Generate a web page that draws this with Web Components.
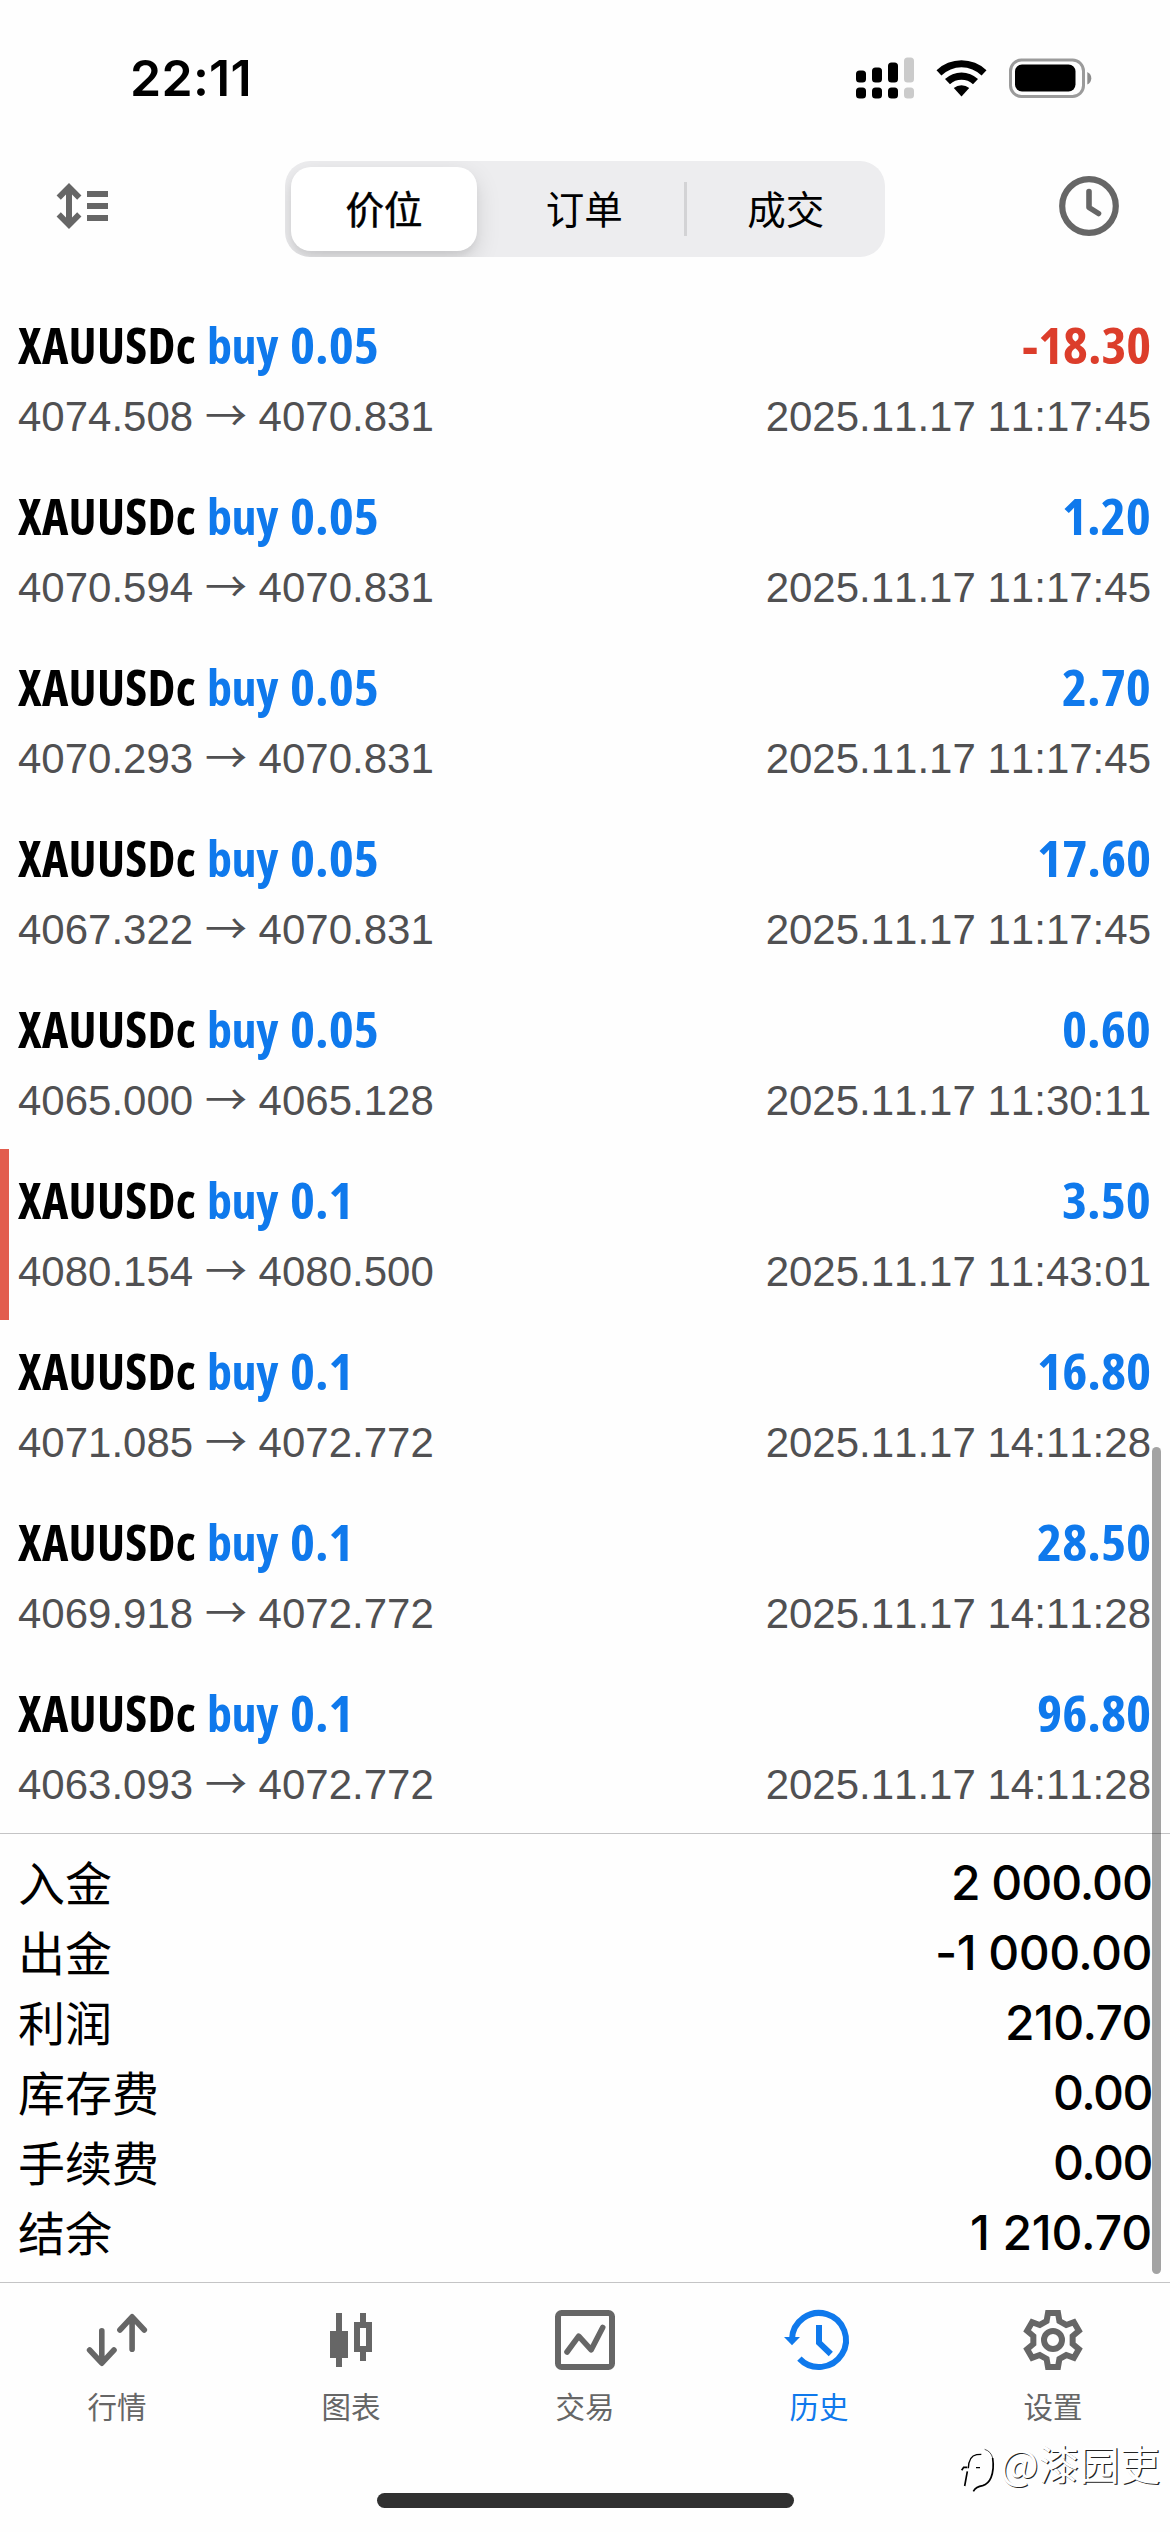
<!DOCTYPE html>
<html lang="zh-CN">
<head>
<meta charset="utf-8">
<title>历史</title>
<style>
  html, body { margin: 0; background: #fefefe; }
  body { width: 1170px; height: 2532px; overflow: hidden; }
</style>
</head>
<body>
<history-screen></history-screen>

<script>
const CJK = "'Noto Sans CJK SC', sans-serif";

class Base extends HTMLElement {
  connectedCallback() {
    if (this.shadowRoot) return;
    this.attachShadow({ mode: 'open' }).innerHTML = this.render();
    this.ready?.();
  }
}

/* Text that takes exactly the width `w`: by tracking, or with `scale` by widening the glyphs. */
customElements.define('fit-text', class extends Base {
  render() {
    return `<style>
      :host { display: block; white-space: pre; width: ${this.getAttribute('w')}px; }
      span { display: inline-block; transform-origin: 0 50%; }
    </style><span><slot></slot></span>`;
  }
  ready() {
    const span = this.shadowRoot.querySelector('span');
    const w = Number(this.getAttribute('w'));
    const natural = span.getBoundingClientRect().width;
    if (this.hasAttribute('scale')) span.style.transform = `scaleX(${w / natural})`;
    else span.style.letterSpacing = (w - natural) / Math.max(1, this.textContent.length) + 'px';
  }
});

customElements.define('status-bar', class extends Base {
  render() {
    return `<style>
      :host { display: flex; box-sizing: border-box; height: 144px; padding: 11px 78px 0 130px;
        align-items: center; justify-content: space-between; }
      fit-text { font: 600 50px/60px Inter, sans-serif; color: #000; }
      svg { display: block; }
    </style>
    <fit-text w="122">22:11</fit-text>
    <svg width="236" height="44" viewBox="856 55.5 236 44">
      <rect x="856" y="70" width="10" height="12" rx="3.5"/><rect x="872" y="67" width="10" height="15" rx="3.5"/>
      <rect x="888" y="62" width="10" height="20" rx="3.5"/><rect x="904" y="57" width="10" height="25" rx="3.5" fill="#cbcbcb"/>
      <rect x="856" y="87" width="10" height="11" rx="3.5"/><rect x="872" y="87" width="10" height="11" rx="3.5"/>
      <rect x="888" y="87" width="10" height="11" rx="3.5"/><rect x="904" y="87" width="10" height="11" rx="3.5" fill="#cbcbcb"/>
      <path d="M936.5 69.8a36 36 0 0 1 50 0l-4.9 5.1a29 29 0 0 0-40.2 0z"/>
      <path d="M945 78.6a24 24 0 0 1 33 0l-5 5.2a17 17 0 0 0-23 0z"/>
      <path d="M953.8 87.6a11.5 11.5 0 0 1 15.4 0L961.5 96z"/>
      <rect x="1010.5" y="59.5" width="73" height="36.5" rx="11" fill="none" stroke="#9b9b9b" stroke-width="3"/>
      <rect x="1015" y="64" width="60.5" height="27" rx="7"/>
      <path d="M1087.3 71.5q4 2 4 6.3t-4 6.3z" fill="#8d8d8d"/>
    </svg>`;
  }
});

customElements.define('segmented-control', class extends Base {
  render() {
    return `<style>
      :host { display: flex; box-sizing: border-box; width: 600px; height: 96px; background: #ededef;
        border-radius: 25px; overflow: hidden; font: 400 38.5px/58px ${CJK}; color: #000; }
      .seg { flex: 1; display: flex; align-items: center; justify-content: center;
        box-sizing: border-box; padding-bottom: 5px; }
      .on { flex: none; width: 186px; margin: 6px 8px 6px 6px; background: #fff; border-radius: 20px; -webkit-text-stroke: .5px #000;
        box-shadow: 0 9px 24px rgba(0,0,0,.13), 0 5px 6px rgba(0,0,0,.05); }
      .bar { width: 3px; height: 54px; align-self: center; background: #d3d3d5; }
    </style>
    <div class="seg on">价位</div><div class="seg">订单</div><div class="bar"></div><div class="seg">成交</div>`;
  }
});

customElements.define('nav-bar', class extends Base {
  render() {
    return `<style>
      :host { display: flex; box-sizing: border-box; height: 130px; padding: 0 50px 0 56px; align-items: center; }
      svg { display: block; }
      segmented-control { margin-left: 177px; }
      .clock { margin-left: auto; }
    </style>
    <svg width="52" height="60" viewBox="56 179 52 60" fill="none" stroke="#666" stroke-width="6">
      <path d="M69 187V225M58.7 197.6L69 187.2L79.3 197.6M58.7 214.4L69 224.8L79.3 214.4M87 194H108M87 206H108M87 218H108"/>
    </svg>
    <segmented-control></segmented-control>
    <svg class="clock" width="61" height="66" viewBox="1059 176 61 66" fill="none" stroke="#666">
      <circle cx="1089" cy="206" r="26.8" stroke-width="6.2"/>
      <path d="M1089 191.5V207.5L1098.5 213.5" stroke-width="5.6" stroke-linecap="round" stroke-linejoin="round"/>
    </svg>`;
  }
});

customElements.define('deal-row', class extends Base {
  render() {
    const a = n => this.getAttribute(n);
    const profit = a('profit');
    /* Condensed figures: 25.3px per digit, narrower point and minus. */
    const width = s => [...s].reduce((t, c) => t + (c === '.' ? 13 : c === '-' ? 15 : 25.3), 0);
    return `<style>
      :host { display: block; box-sizing: border-box; height: 171px; padding: 21px 19px 0 18px; }
      :host([marked]) { border-left: 9px solid #e25d4e; padding-left: 9px; }
      .top, .sub, .prices { display: flex; }
      .top, .sub { justify-content: space-between; }
      .top { font: 700 50px/60px 'Open Sans', sans-serif; font-stretch: 75%; color: #0f79ec; }
      .top > div { display: flex; }
      .name { color: #000; margin-right: 11px; }
      .side { margin-right: 12px; }
      .loss { color: #dc3d2b; }
      .sub { margin-top: 18px; font: 400 42px/48px 'Liberation Sans', sans-serif; font-kerning: none; color: #505052; white-space: pre; }
      .prices { align-items: baseline; }
      .arrow { width: 42px; margin: 0 11.7px; font: 400 42px/20px ${CJK}; }
    </style>
    <div class="top">
      <div><fit-text class="name" w="178">XAUUSDc</fit-text><fit-text class="side" w="71">buy</fit-text><fit-text scale w="${width(a('volume'))}">${a('volume')}</fit-text></div>
      <fit-text scale class="${profit[0] === '-' ? 'loss' : ''}" w="${width(profit)}">${profit}</fit-text>
    </div>
    <div class="sub">
      <div class="prices"><span>${a('open')}</span><span class="arrow">→</span><span>${a('close')}</span></div>
      <span>${a('time')}</span>
    </div>`;
  }
});

customElements.define('summary-row', class extends Base {
  render() {
    return `<style>
      :host { display: flex; height: 70px; justify-content: space-between; padding: 0 18px; color: #000; }
      .label { font: 400 47px/65px ${CJK}; }
      .value { font: 500 48px/70px Inter, sans-serif; }
    </style>
    <span class="label"><slot></slot></span><fit-text class="value" w="${this.getAttribute('w')}">${this.getAttribute('value')}</fit-text>`;
  }
});

const GEAR = (() => {
  const tooth = [[-6.4, -19], [-5, -27], [5, -27], [6.4, -19]];
  const pts = [];
  for (let i = 0; i < 6; i++) {
    const c = Math.cos(i * Math.PI / 3), s = Math.sin(i * Math.PI / 3);
    for (const [x, y] of tooth) pts.push((x * c - y * s).toFixed(2) + ' ' + (x * s + y * c).toFixed(2));
  }
  return 'M' + pts.join('L') + 'Z';
})();

const ICONS = {
  quotes: `<path stroke-width="5.6" stroke-linecap="round" stroke-linejoin="round" d="M-15.2-9.3V23M-27.4 10L-15.2 23.2L-3 10M15.1 9.3V-23M2.9-10L15.1-23.2L27.3-10"/>`,
  chart: `<path fill="currentColor" stroke="none" fill-rule="evenodd" d="M-15-27h6v18h6v27h-6v9h-6v-9h-6V-9h6zM9-27h6v9h6v30h-6v9h-6v-9H3v-30h6zM9-12V6h6v-18z"/>`,
  trade: `<rect x="-27" y="-27" width="54" height="54" rx="3.5" stroke-width="6"/><path stroke-width="5.6" stroke-linecap="round" stroke-linejoin="round" d="M-18 12L-6.3-3.8L6.2 9.8L17.7-12.5"/>`,
  history: `<path stroke-width="6" d="M-27-1A27 27 0 1 1-19.6 18.6M0-15V2.8L11.8 14"/><path fill="currentColor" stroke="none" d="M-35-3h16l-8 8.3z"/>`,
  settings: `<path stroke-width="6" stroke-linejoin="miter" d="${GEAR}"/><circle r="9" stroke-width="6"/>`
};

customElements.define('tab-item', class extends Base {
  render() {
    return `<style>
      :host { flex: 1; display: flex; flex-direction: column; align-items: center; gap: 18px; color: #666; }
      :host([active]) { color: #0f79ec; }
      svg { display: block; overflow: visible; }
      span { font: 400 29.5px/35px ${CJK}; }
    </style>
    <svg width="72" height="60" viewBox="-36 -30 72 60" fill="none" stroke="currentColor">${ICONS[this.getAttribute('icon')]}</svg>
    <span><slot></slot></span>`;
  }
});

customElements.define('tab-bar', class extends Base {
  render() {
    return `<style>
      :host { display: flex; flex-direction: column; box-sizing: border-box; height: 250px; border-top: 1px solid #c4c4c5; padding-top: 27px; }
      nav { display: flex; }
      .home { width: 417px; height: 15px; border-radius: 7.5px; background: #303030; margin: auto auto 24px; }
    </style><nav><slot></slot></nav><div class="home"></div>`;
  }
});

customElements.define('scroll-thumb', class extends Base {
  render() {
    return `<style>
      :host { position: absolute; left: 1152px; top: 1447px; width: 9px; height: 827px; border-radius: 4.5px; background: rgba(0,0,0,.355); }
    </style>`;
  }
});

customElements.define('author-mark', class extends Base {
  render() {
    return `<style>
      :host { position: absolute; right: 10px; top: 2440px; display: flex; align-items: flex-start; gap: 4px; white-space: nowrap;
        font: 400 40.5px/46px ${CJK}; color: #fff; text-shadow: 1.2px 1px 0 #222; }
      svg { display: block; }
    </style>
    <svg width="36" height="54" viewBox="50 30 108 162" fill="none" stroke="#000">
      <path stroke-width="5" d="M64 168L72 124M55 121L61 112H72"/>
      <path stroke-width="4" d="M75 115Q76 78 100 74L114 73M98 113h12"/>
      <path stroke-width="2" d="M124 58Q143 64 148 84"/>
      <path stroke-width="5" d="M148 84Q153 118 143 143Q135 162 118 167Q98 170 90 184"/>
    </svg><span>@漆园吏</span>`;
  }
});

const DEALS = [
  ['0.05', '-18.30', '4074.508', '4070.831', '11:17:45'],
  ['0.05', '1.20', '4070.594', '4070.831', '11:17:45'],
  ['0.05', '2.70', '4070.293', '4070.831', '11:17:45'],
  ['0.05', '17.60', '4067.322', '4070.831', '11:17:45'],
  ['0.05', '0.60', '4065.000', '4065.128', '11:30:11'],
  ['0.1', '3.50', '4080.154', '4080.500', '11:43:01', 'marked'],
  ['0.1', '16.80', '4071.085', '4072.772', '14:11:28'],
  ['0.1', '28.50', '4069.918', '4072.772', '14:11:28'],
  ['0.1', '96.80', '4063.093', '4072.772', '14:11:28']
];
const SUMMARY = [
  ['入金', '2 000.00', 201], ['出金', '-1 000.00', 217], ['利润', '210.70', 147],
  ['库存费', '0.00', 99], ['手续费', '0.00', 99], ['结余', '1 210.70', 182]
];

customElements.define('history-screen', class extends Base {
  render() {
    return `<style>
      :host { position: relative; display: flex; flex-direction: column; width: 1170px; height: 2532px; background: #fefefe; overflow: hidden; }
      .deals { padding-top: 20px; }
      .summary { border-top: 1px solid #c4c4c5; padding-top: 13.5px; }
      tab-bar { margin-top: auto; }
    </style>
    <status-bar></status-bar>
    <nav-bar></nav-bar>
    <div class="deals">${DEALS.map(d => `<deal-row volume="${d[0]}" profit="${d[1]}" open="${d[2]}" close="${d[3]}" time="2025.11.17 ${d[4]}" ${d[5] || ''}></deal-row>`).join('')}</div>
    <div class="summary">${SUMMARY.map(s => `<summary-row value="${s[1]}" w="${s[2]}">${s[0]}</summary-row>`).join('')}</div>
    <tab-bar>
      <tab-item icon="quotes">行情</tab-item>
      <tab-item icon="chart">图表</tab-item>
      <tab-item icon="trade">交易</tab-item>
      <tab-item icon="history" active>历史</tab-item>
      <tab-item icon="settings">设置</tab-item>
    </tab-bar>
    <scroll-thumb></scroll-thumb>
    <author-mark></author-mark>`;
  }
});
</script>
</body>
</html>
